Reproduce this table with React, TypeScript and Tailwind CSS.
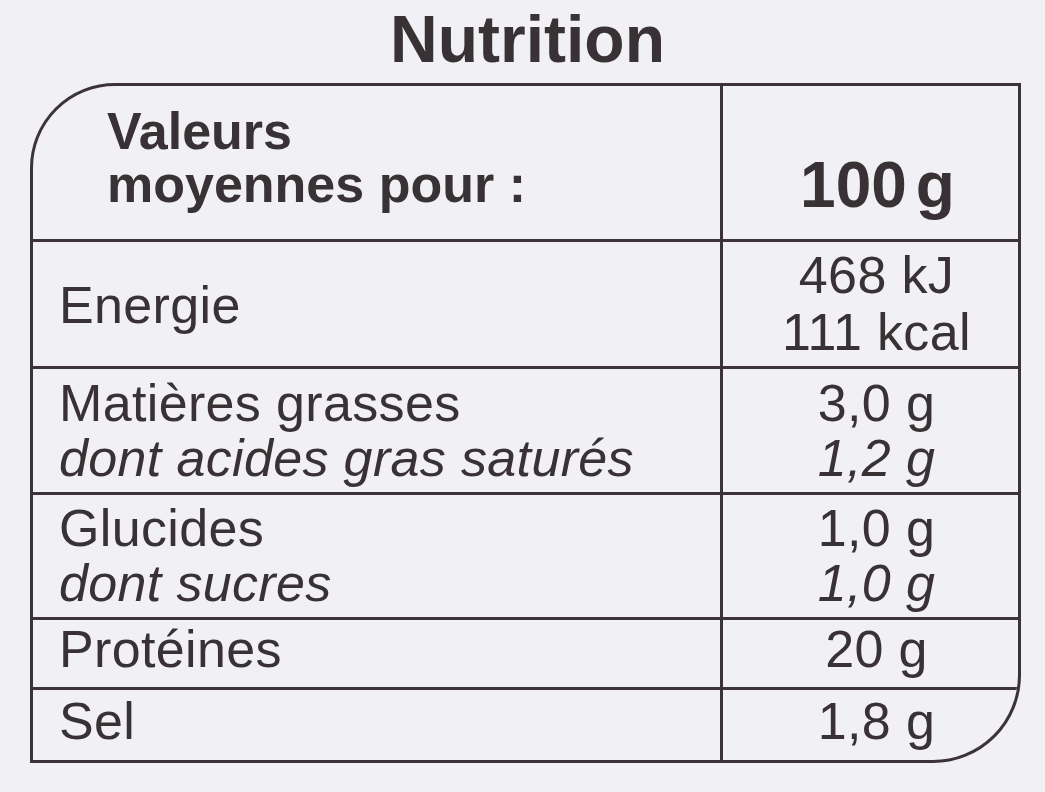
import React from "react";

const font = { fontFamily: '"Liberation Sans", Arial, Helvetica, sans-serif' };

type Row = {
  h: string;
  left: React.ReactNode;
  right: React.ReactNode;
  lh: string;
  rlh?: string;
};

export default function App() {
  const rows: Row[] = [
    {
      h: "h-[127px]",
      lh: "leading-[55px]",
      rlh: "leading-[57px]",
      left: <div className="pt-[2px]">Energie</div>,
      right: (
        <>
          <div>468 kJ</div>
          <div>111 kcal</div>
        </>
      ),
    },
    {
      h: "h-[126px]",
      lh: "leading-[55px]",
      left: (
        <>
          <div>Matières grasses</div>
          <div className="italic">dont acides gras saturés</div>
        </>
      ),
      right: (
        <>
          <div>3,0 g</div>
          <div className="italic">1,2 g</div>
        </>
      ),
    },
    {
      h: "h-[125px]",
      lh: "leading-[55px]",
      left: (
        <>
          <div>Glucides</div>
          <div className="italic">dont sucres</div>
        </>
      ),
      right: (
        <>
          <div>1,0 g</div>
          <div className="italic">1,0 g</div>
        </>
      ),
    },
    {
      h: "h-[70px]",
      lh: "leading-[55px]",
      left: <div className="pb-[8px]">Protéines</div>,
      right: <div className="pb-[8px]">20 g</div>,
    },
    {
      h: "h-[73px]",
      lh: "leading-[55px]",
      left: <div className="pb-[8px]">Sel</div>,
      right: <div className="pb-[8px]">1,8 g</div>,
    },
  ];

  return (
    <div
      className="w-[1045px] h-[792px] bg-[#f1f0f5] text-[#393234] pt-[6px] overflow-hidden"
      style={font}
    >
      <div className="w-[991px] ml-[30px] text-center text-[66px] font-bold leading-none h-[66px] pl-[4px]">
        Nutrition
      </div>
      <div className="w-[991px] ml-[30px] mt-[11px] border-[3px] border-[#3b3336] rounded-tl-[85px] rounded-br-[88px] overflow-hidden flex flex-col">
        <div className="flex h-[153px]">
          <div className="w-[690px] border-r-[3px] border-[#3b3336] pl-[74px] pt-[19px] text-[52px] font-bold leading-[53px]">
            <div>Valeurs</div>
            <div>moyennes pour :</div>
          </div>
          <div className="flex-1 flex justify-center pl-[14px] pt-[67px] text-[64px] font-bold leading-[64px]">
            <span>100</span>
            <span className="ml-[9px]">g</span>
          </div>
        </div>
        {rows.map((r, i) => (
          <div key={i} className={`flex border-t-[3px] border-[#3b3336] ${r.h}`}>
            <div
              className={`w-[690px] border-r-[3px] border-[#3b3336] pl-[26px] flex flex-col justify-center text-[52px] tracking-[0.35px] ${r.lh}`}
            >
              {r.left}
            </div>
            <div
              className={`flex-1 flex flex-col justify-center items-center pl-[12px] text-[52px] tracking-[0.35px] ${r.rlh ?? r.lh}`}
            >
              {r.right}
            </div>
          </div>
        ))}
      </div>
    </div>
  );
}
